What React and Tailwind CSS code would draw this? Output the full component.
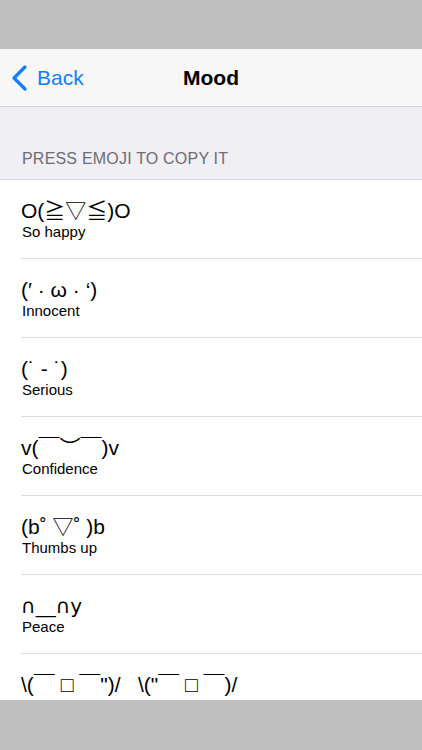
const font = { fontFamily: '"Liberation Sans", "DejaVu Sans", "Noto Sans CJK JP", sans-serif' };
const faceFont = { fontFamily: '"Liberation Sans", "Noto Sans CJK JP", "DejaVu Sans", sans-serif' };
const dejaFont = { fontFamily: '"DejaVu Sans", "Liberation Sans", sans-serif' };

const moods = [
  { face: 'O(≧▽≦)O', label: 'So happy' },
  { face: '(′ · ω · ‘)', label: 'Innocent' },
  { face: '(˙ - ˙)', label: 'Serious' },
  { face: 'v(￣︶￣)v', label: 'Confidence' },
  { face: '(b˚ ▽˚ )b', label: 'Thumbs up' },
  { face: '∩__∩y', label: 'Peace', deja: true },
  { face: '\\(￣ □ ￣")/   \\("￣ □ ￣)/', label: 'Speechless' },
];

export default function App() {
  return (
    <div className="w-[422px] h-[750px] flex flex-col bg-white overflow-hidden" style={font}>
      <div className="h-[49px] bg-[#c0c0c0] shrink-0" />
      <div className="flex-1 overflow-hidden flex flex-col">
        <div className="h-[58px] shrink-0 bg-[#f7f7f7] border-b border-[#d4d4d6] relative flex items-center justify-center">
          <div className="absolute left-[11px] top-0 h-full flex items-center gap-[9px] text-[#157efb]">
            <svg width="17" height="26" viewBox="0 0 17 26" fill="none">
              <path d="M14 2 L3 13 L14 24" stroke="currentColor" strokeWidth="3.2" strokeLinecap="round" strokeLinejoin="round" />
            </svg>
            <span className="text-[21px] leading-none">Back</span>
          </div>
          <span className="text-[21px] font-bold text-black leading-none">Mood</span>
        </div>
        <div className="h-[73px] shrink-0 bg-[#efeff4] border-b border-[#dcdce0] flex items-end px-[22px] pb-[8px]">
          <span className="text-[16px] text-[#6d6d72] tracking-[0.2px]">PRESS EMOJI TO COPY IT</span>
        </div>
        <div className="flex flex-col">
          {moods.map((m) => (
            <div key={m.label} className="pl-[21px] shrink-0">
              <div className="h-[79px] border-b border-[#dcdcdf] pt-[19px] flex flex-col">
                <span className={`leading-[24px] text-black whitespace-pre ${m.deja ? 'text-[20px]' : 'text-[21px]'}`} style={m.deja ? dejaFont : faceFont}>{m.face}</span>
                <span className="text-[15px] leading-[17px] text-black pl-px">{m.label}</span>
              </div>
            </div>
          ))}
        </div>
      </div>
      <div className="h-[50px] bg-[#c0c0c0] shrink-0" />
    </div>
  );
}
